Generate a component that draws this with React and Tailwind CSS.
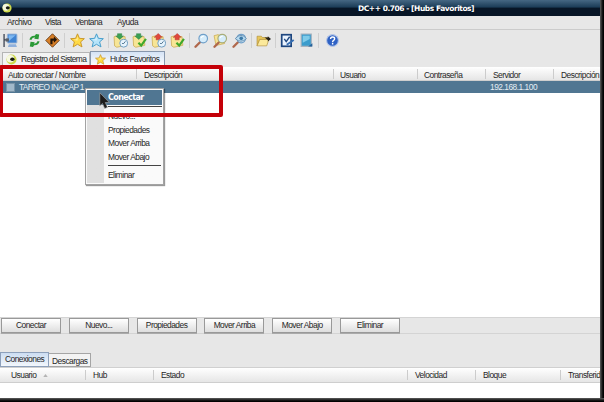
import React from 'react';
import clsx from 'clsx';

const Eye = ({ className }) => (
  <svg viewBox="0 0 10 10" className={clsx('shrink-0', className)}>
    <circle cx="5" cy="5" r="4.6" fill="#cdd84a" />
    <circle cx="4" cy="4.3" r="3.4" fill="#f6f8df" />
    <ellipse cx="5.8" cy="4.8" rx="2" ry="1.6" fill="#161a10" />
  </svg>
);

const Star = ({ fill = '#ffda45', stroke = '#c9962b', className }) => (
  <svg viewBox="0 0 14 14" className={clsx('shrink-0', className)}>
    <path
      d="M7 .8 8.8 5l4.6.3-3.5 3 1.3 4.7L7 10.5 2.9 13l1.2-4.7-3.5-3L5.2 5z"
      fill={fill}
      stroke={stroke}
      strokeWidth=".9"
      strokeLinejoin="round"
    />
    <path d="M7 3 6.2 6l-3 .2L7 7z" fill="#fff" opacity=".7" />
  </svg>
);

const Folder = () => (
  <path d="M1 3.5 5 2.5l1.2 1.3 5-.5.8 8.2-8.5 1.8L1.5 12z" fill="#f7e596" stroke="#c9a94f" strokeWidth=".7" />
);

const Clock = () => (
  <g>
    <circle cx="10" cy="9.5" r="3.7" fill="#e6f3fc" stroke="#6f9cc0" strokeWidth=".9" />
    <path d="M10 9.8 11.6 7.8M10 9.8H8.5" stroke="#38607f" strokeWidth=".8" />
  </g>
);

const Check = () => <path d="m6 9 2.6 2.7L13 5.5" fill="none" stroke="#3fa82b" strokeWidth="2" />;
const GreenArrow = () => <path d="M4.2.6h4v2.2h1.6L6.3 6 2.6 2.8h1.6z" fill="#3ba054" stroke="#2b7c40" strokeWidth=".4" />;
const RedArrow = () => <path d="M6.8.4 10.4 4H8.6v2.4H4.8V4H3z" fill="#e0483c" stroke="#a92b25" strokeWidth=".4" />;

const Lens = ({ rim = '#6f9fc9' }) => (
  <g>
    <path d="M1.4 12.8 5.6 8.6" stroke="#b0684c" strokeWidth="2.2" strokeLinecap="round" />
    <circle cx="8.6" cy="5.2" r="4" fill="#d6edfb" stroke={rim} strokeWidth="1.1" />
    <path d="M6.5 4.8q.7-2 2.6-1.8" stroke="#fff" strokeWidth="1" fill="none" />
  </g>
);

const drawings = {
  connect: (
    <g>
      <rect x="4" y="1" width="9" height="8.4" rx=".7" fill="#3f83d2" stroke="#9db6d6" strokeWidth=".9" />
      <path d="M5.2 2.2h6.6L5.2 7.6z" fill="#7fb8f0" />
      <path d="M5.5 10.4h6.5l1 2.6H4.6z" fill="#8fb0dc" />
      <path d="M1 1v12M1 6.5h4" stroke="#3c4250" strokeWidth="1.2" />
      <path d="M2.5 5h3v3h-3z" fill="#59616c" />
    </g>
  ),
  refresh: (
    <g fill="#2b9a37">
      <path d="M2.3 6.3Q3 2.4 7.3 2.6L8.4 1l3 .3-.7 4.6-4-.6.9-1Q5 3.8 4.3 6.3z" />
      <path d="M11.7 7.6Q11 11.6 6.7 11.4L5.6 13l-3-.3.7-4.6 4 .6-.9 1Q9 10.2 9.7 7.6z" />
    </g>
  ),
  direction: (
    <g>
      <path d="m7 .7 6.3 6.3L7 13.3.7 7z" fill="#d87f27" stroke="#5d3510" strokeWidth=".8" />
      <path d="M5 10.4V5.2h3.300V3.3l3 3-3 2.900V7.3H7v3.1z" fill="#24160a" />
    </g>
  ),
  queue: <g><Folder /><GreenArrow /><Clock /></g>,
  finished: <g><Folder /><GreenArrow /><Check /></g>,
  waiting: <g><Folder /><RedArrow /><Clock /></g>,
  uploads: <g><Folder /><RedArrow /><Check /></g>,
  search: <Lens />,
  adl: (
    <g>
      <path d="M1 2.5 5 1.5l1.2 1.3 4-.5.6 7.5-8 1.8z" fill="#f7e596" stroke="#c9a94f" strokeWidth=".7" />
      <Lens rim="#a9ad78" />
    </g>
  ),
  spy: (
    <g>
      <Lens />
      <path d="M3 5.2q5.5-6 10.5 0-5 5-10.5 0z" fill="#b9dcf1" stroke="#577fa3" strokeWidth=".7" />
      <circle cx="8.6" cy="5" r="1.7" fill="#3c7aa8" />
    </g>
  ),
  open: (
    <g>
      <path d="M1 3h4l1 1.2h5V6H3.5L1 12z" fill="#e8c75c" stroke="#b18f35" strokeWidth=".6" />
      <path d="M3.5 6H12l-2 6H1z" fill="#fbe99b" stroke="#b18f35" strokeWidth=".6" />
      <path d="M8 4.3h3V3l3 2.6-3 2.4V6.6z" fill="#25221c" />
    </g>
  ),
  settings: (
    <g>
      <rect x="1.6" y="1.6" width="8.8" height="10.8" fill="#e9f2fd" stroke="#1d4680" strokeWidth="1.6" />
      <path d="m4 5.5 1.8 2.5L9 3.5" fill="none" stroke="#1d4680" strokeWidth="1.3" />
      <path d="m6.3 11 6.5-4.5" stroke="#376fb3" strokeWidth="1.8" />
    </g>
  ),
  notepad: (
    <g>
      <path d="M2 1h9.5v11.5H2z" fill="#3b9ccc" stroke="#a7b2bd" strokeWidth="1" />
      <path d="M3.5 2.5H10v3L3.5 9z" fill="#7fcbe9" />
      <path d="m8.5 12.5 4-3v3z" fill="#27639b" />
    </g>
  ),
  help: (
    <g>
      <circle cx="7" cy="7" r="5.5" fill="#2f62c4" stroke="#b6c7e8" strokeWidth="1" />
      <path d="M5.2 5.6q0-1.9 1.900-1.900T9 5.3q0 1-1 1.5-.9.5-.9 1.5M7.1 9.2v1.5" fill="none" stroke="#fff" strokeWidth="1.3" />
    </g>
  ),
};

const Tool = ({ name, className }) => (
  <div className={clsx('h-[15px] w-[15px] shrink-0', className)}>
    {name === 'star' && <Star className="size-[15px]" />}
    {name === 'blueStar' && <Star fill="#b5e4fa" stroke="#469cca" className="size-[15px]" />}
    {drawings[name] && (
      <svg viewBox="0 0 14 14" className="size-[15px]">
        {drawings[name]}
      </svg>
    )}
  </div>
);

const Divider = ({ className }) => <div className={clsx('h-[15px] w-px shrink-0 bg-[#cfcfcf]', className)} />;

const Column = ({ className, children }) => (
  <div className={clsx('relative h-full shrink-0 whitespace-nowrap', className)}>
    {children}
    <span className="absolute top-[2px] right-0 h-[10px] w-px bg-[#cccccc]" />
  </div>
);

const header = 'flex shrink-0 overflow-hidden border-b border-[#cecece] bg-linear-to-b from-white to-[#e6e6e6]';

const buttons = ['Conectar', 'Nuevo...', 'Propiedades', 'Mover Arriba', 'Mover Abajo', 'Eliminar'];

const ContextMenu = () => (
  <div className="absolute top-[88px] left-[85px] h-[97px] w-[79px] border border-[#a3a3a3] bg-[#fafafa] p-px shadow-[1px_1px_1px_#00000066]">
    <div className="flex h-full flex-col bg-linear-to-r from-[#e0e0e0] from-[17px] to-[#fafafa] to-[17px]">
      <div className="flex h-[15px] shrink-0 items-center bg-[#507692] pl-[21px] font-['DejaVu_Sans'] text-[8px] font-bold tracking-[-0.6px] text-white">
        Conectar
      </div>
      <div className="mt-px ml-[21px] h-px shrink-0 bg-[#444]" />
      <div className="mt-[3px] pl-[21px]">
        <div className="h-[13.5px] leading-[13.5px]">Nuevo...</div>
        <div className="h-[13.5px] leading-[13.5px]">Propiedades</div>
        <div className="h-[13.5px] leading-[13.5px]">Mover Arriba</div>
        <div className="h-[13.5px] leading-[13.5px]">Mover Abajo</div>
      </div>
      <div className="mt-px mr-px ml-[21px] h-px shrink-0 bg-[#444]" />
      <div className="mt-[3px] pl-[21px] leading-[13px]">Eliminar</div>
    </div>
  </div>
);

const App = () => (
  <div className="relative flex h-[402px] w-[604px] overflow-hidden bg-[#151515] font-['Liberation_Sans',sans-serif] text-[8.4px] tracking-[-0.5px] text-[#262626]">
    <div className="flex h-[398px] w-[600px] flex-col overflow-hidden bg-[#e7e7e7]">
      <div className="relative flex h-[16px] shrink-0 items-center bg-linear-to-b from-[#456783] via-[#1b3c57] via-45% to-[#071526] to-50% pl-[2px]">
        <Eye className="size-[10px]" />
        <span className="ml-[346px] font-['DejaVu_Sans'] text-[7.5px] leading-[15px] font-bold tracking-[-0.45px] whitespace-nowrap text-white">
          DC++ 0.706 - [Hubs Favoritos]
        </span>
      </div>

      <nav className="flex h-[14px] shrink-0 border-b border-[#cbcbcb] leading-[13px]">
        <span className="ml-[7px] w-[38px]">Archivo</span>
        <span className="w-[30px]">Vista</span>
        <span className="w-[42px]">Ventana</span>
        <span>Ayuda</span>
      </nav>

      <div className="flex h-[21px] shrink-0 items-center pb-px pl-[3px]">
        <Tool name="connect" />
        <Divider className="mx-[4px]" />
        <Tool name="refresh" />
        <Tool name="direction" className="ml-[3px]" />
        <Divider className="mx-[4px]" />
        <Tool name="star" className="ml-px" />
        <Tool name="blueStar" className="ml-[4px]" />
        <Divider className="mx-[4px]" />
        <Tool name="queue" />
        <Tool name="finished" className="ml-[4px]" />
        <Tool name="waiting" className="ml-[4px]" />
        <Tool name="uploads" className="ml-[4px]" />
        <Divider className="mx-[4px]" />
        <Tool name="search" />
        <Tool name="adl" className="ml-[4px]" />
        <Tool name="spy" className="ml-[4px]" />
        <Divider className="mx-[4px]" />
        <Tool name="open" />
        <Divider className="mx-[4px]" />
        <Tool name="settings" />
        <Tool name="notepad" className="ml-[4px]" />
        <Divider className="mx-[4px]" />
        <Tool name="help" className="ml-[2px]" />
      </div>

      <div className="flex h-[16px] shrink-0 items-start pl-[2px]">
        <div className="mt-px flex h-[14px] w-[88px] items-center border border-[#b5b5b5] bg-[#f3f3f3] pl-[3px] whitespace-nowrap">
          <Eye className="size-[11px]" />
          <span className="ml-[4px] tracking-[-0.6px]">Registro del Sistema</span>
        </div>
        <div className="flex h-[15px] w-[75px] items-center border border-b-0 border-[#8797ac] bg-linear-to-b from-[#d5e3f5] to-white pl-[4px] whitespace-nowrap">
          <Star className="size-[11px]" />
          <span className="ml-[4px]">Hubs Favoritos</span>
        </div>
      </div>

      <div className={clsx(header, 'h-[14px] leading-[17px]')}>
        <Column className="w-[137px] pl-[8px]">Auto conectar / Nombre</Column>
        <Column className="w-[197px] pl-[7px]">Descripción</Column>
        <Column className="w-[84px] pl-[6px]">Usuario</Column>
        <Column className="w-[68px] pl-[6px]">Contraseña</Column>
        <Column className="w-[68px] pl-[7px]">Servidor</Column>
        <Column className="w-[60px] pl-[7px]">Descripción</Column>
      </div>
      <div className="flex min-h-0 flex-1 flex-col bg-white">
        <div className="flex h-[12px] items-center bg-[#507692] pl-[6px] text-[#e5eef4]">
          <span className="size-[9px] border border-[#7893a7] bg-[#a2b9ca]" />
          <span className="ml-[4px] w-[471px] tracking-[-0.65px]">TARREO INACAP 1</span>
          <span>192.168.1.100</span>
        </div>
      </div>

      <div className="flex h-[17px] shrink-0 items-start gap-[7.8px] border-y border-[#d4d4d4] pl-px">
        {buttons.map((label) => (
          <button
            key={label}
            className="h-[15px] w-[60px] shrink-0 border border-[#999] bg-linear-to-b from-white to-[#dedede] leading-[13px] shadow-[0_1px_0_#aaa]"
          >
            {label}
          </button>
        ))}
      </div>

      <div className="flex h-[34px] shrink-0 items-end border-b border-[#d0d0d0]">
        <div className="h-[15px] w-[49px] border border-[#8da0bb] bg-linear-to-b from-[#ccddf2] to-[#f3f7fc] pl-[4px] leading-[13px]">
          Conexiones
        </div>
        <div className="h-[14px] w-[42px] border border-l-0 border-[#a5a5a5] bg-[#f3f3f3] pl-[3px] leading-[14px]">
          Descargas
        </div>
      </div>

      <div className={clsx(header, 'h-[15px] leading-[15px]')}>
        <Column className="w-[86px] pl-[11px]">
          Usuario
          <svg viewBox="0 0 6 4" className="ml-[7px] inline h-[3px] w-[5px]">
            <path d="M0 4 3 0l3 4z" fill="#b4b4b4" />
          </svg>
        </Column>
        <Column className="w-[68px] pl-[7px]">Hub</Column>
        <Column className="w-[254px] pl-[7px]">Estado</Column>
        <Column className="w-[68px] pl-[7px]">Velocidad</Column>
        <Column className="w-[85px] pl-[7px]">Bloque</Column>
        <Column className="w-[60px] pl-[7px]">Transferid</Column>
      </div>
      <div className="h-[15px] shrink-0 bg-white" />
    </div>

    <div className="absolute inset-y-0 right-0 w-[4px] bg-linear-to-r from-[#606060] to-black" />
    <div className="absolute inset-x-0 bottom-0 h-[4px] bg-linear-to-b from-[#606060] to-black" />

    <ContextMenu />
    <div className="absolute top-[65px] -left-px h-[52px] w-[224px] rounded-[2px] border-4 border-[#c40008]" />
    <svg viewBox="0 0 11 17" className="absolute top-[92px] left-[99px] h-[17px] w-[11px]">
      <path d="M.8.8v13l2.7-2.3 2.2 5 2.8-1.2-2.2-4.8h4z" fill="#1c1c1c" stroke="#aaa" strokeWidth=".6" />
    </svg>
  </div>
);

export default App;
